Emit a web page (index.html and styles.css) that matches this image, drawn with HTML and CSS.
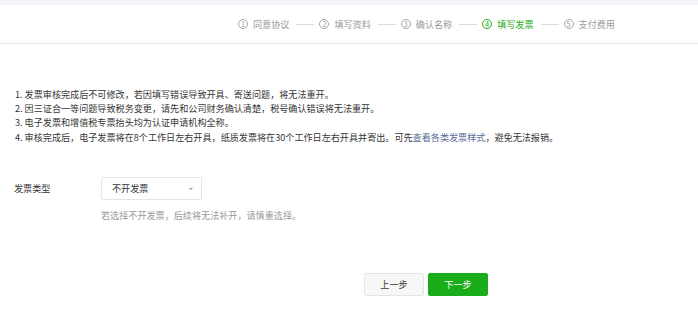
FILE: index.html
```html
<!DOCTYPE html>
<html lang="zh-CN">
<head>
<meta charset="utf-8">
<title>填写发票</title>
<link rel="stylesheet" href="styles.css">
</head>
<body>
<div class="topband"></div>
<header class="header">
  <ol class="steps">
    <li class="step"><span class="num">1</span><span class="label">同意协议</span></li>
    <li class="sep"></li>
    <li class="step"><span class="num">2</span><span class="label">填写资料</span></li>
    <li class="sep"></li>
    <li class="step"><span class="num">3</span><span class="label">确认名称</span></li>
    <li class="sep"></li>
    <li class="step active"><span class="num">4</span><span class="label">填写发票</span></li>
    <li class="sep"></li>
    <li class="step"><span class="num">5</span><span class="label">支付费用</span></li>
  </ol>
</header>
<main class="main">
  <div class="notes">
    <p>1. 发票审核完成后不可修改，若因填写错误导致开具、寄送问题，将无法重开。</p>
    <p>2. 因三证合一等问题导致税务变更，请先和公司财务确认清楚，税号确认错误将无法重开。</p>
    <p>3. 电子发票和增值税专票抬头均为认证申请机构全称。</p>
    <p>4. 审核完成后，电子发票将在8个工作日左右开具，纸质发票将在30个工作日左右开具并寄出。可先<a class="link" href="#">查看各类发票样式</a>，避免无法报销。</p>
  </div>
  <div class="form-row">
    <div class="form-label">发票类型</div>
    <div class="form-field">
      <div class="select"><span>不开发票</span><i class="caret"></i></div>
      <p class="hint">若选择不开发票，后续将无法补开，请慎重选择。</p>
    </div>
  </div>
  <div class="actions">
    <button class="btn btn-default" type="button">上一步</button>
    <button class="btn btn-primary" type="button">下一步</button>
  </div>
</main>
</body>
</html>
```

FILE: styles.css
```css
html, body {
  margin: 0;
  padding: 0;
  background: #fff;
}
body {
  font-family: "Noto Sans CJK SC", "Noto Sans", sans-serif;
  font-size: 9.1px;
  color: #353535;
}
.topband {
  height: 5px;
  background: #f3f4f7;
}
.header {
  height: 38px;
  border-bottom: 1px solid #e6e6e9;
  display: flex;
  align-items: center;
}
.steps {
  list-style: none;
  margin: 0;
  padding: 0 0 0 238px;
  display: flex;
  align-items: center;
  color: #9a9a9a;
}
.step {
  display: flex;
  align-items: center;
}
.num {
  box-sizing: border-box;
  width: 10px;
  height: 10px;
  border: 1px solid #a8a8a8;
  border-radius: 50%;
  display: flex;
  align-items: center;
  justify-content: center;
  font-size: 7px;
  line-height: 1;
  margin-right: 5px;
}
.label {
  line-height: 14px;
}
.step.active {
  color: #1aad19;
}
.step.active .num {
  border-color: #1aad19;
}
.sep {
  width: 18px;
  height: 1px;
  background: #dcdcdc;
  margin: 0 5px 0 7px;
}
.main {
  padding-top: 43px;
}
.notes {
  padding-left: 15px;
  color: #353535;
}
.notes p {
  margin: 0;
  line-height: 14.2px;
}
.link {
  color: #576b95;
  text-decoration: none;
}
.form-row {
  display: flex;
  margin-top: 33px;
  padding-left: 14px;
}
.form-label {
  width: 87px;
  line-height: 23px;
  color: #353535;
}
.select {
  box-sizing: border-box;
  width: 101px;
  height: 23px;
  border: 1px solid #e4e4e8;
  border-radius: 2px;
  display: flex;
  align-items: center;
  justify-content: space-between;
  padding: 0 8px 0 10px;
  color: #353535;
}
.caret {
  width: 0;
  height: 0;
  border-left: 2px solid transparent;
  border-right: 2px solid transparent;
  border-top: 2.5px solid #999;
  margin-top: 2px;
}
.hint {
  margin: 8px 0 0;
  line-height: 14px;
  color: #9a9a9a;
}
.actions {
  display: flex;
  gap: 4px;
  margin-top: 51px;
  padding-left: 364px;
}
.btn {
  box-sizing: border-box;
  width: 60px;
  height: 23px;
  border-radius: 2px;
  font-family: inherit;
  font-size: 9.1px;
  padding: 0;
  cursor: pointer;
}
.btn-default {
  background: #f7f7f7;
  border: 1px solid #e4e4e4;
  color: #353535;
}
.btn-primary {
  background: #1aad19;
  border: 1px solid #1aad19;
  color: #fff;
}
```
